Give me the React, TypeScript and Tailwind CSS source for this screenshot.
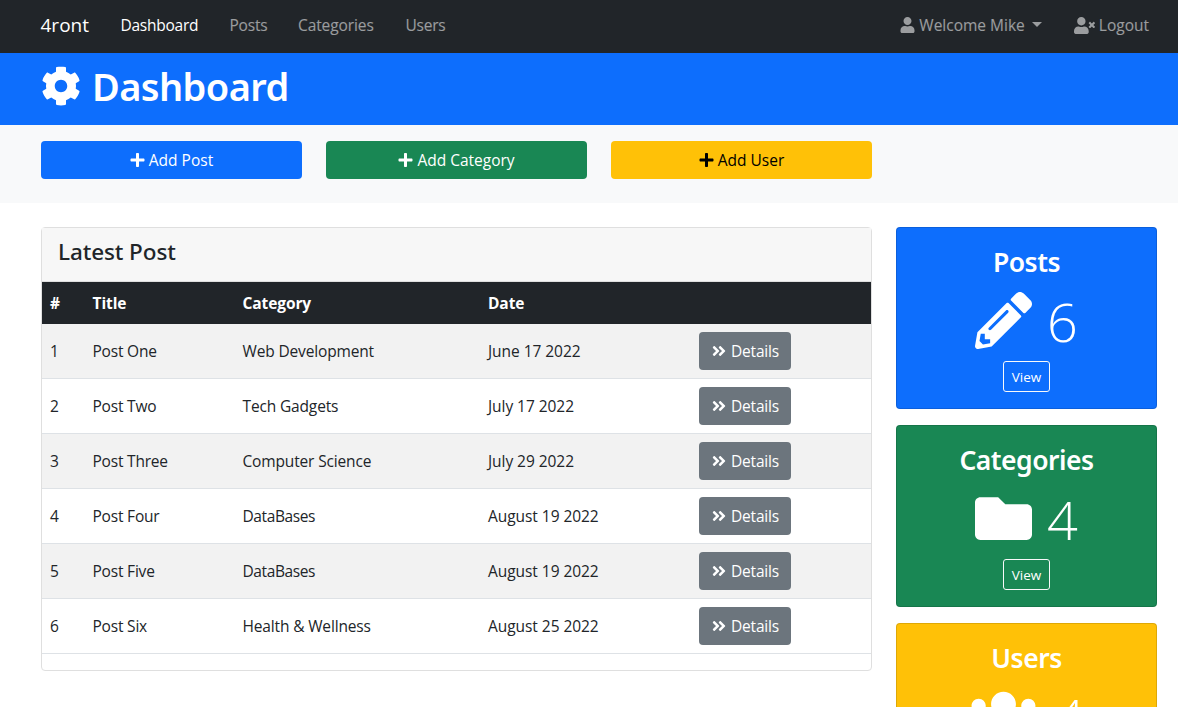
import type { ReactNode } from "react";
import { FaAngleDoubleRight, FaCog, FaFolder, FaPencilAlt, FaPlus, FaUser, FaUserTimes, FaUsers } from "react-icons/fa";

const posts = [
  { title: "Post One", category: "Web Development", date: "June 17 2022" },
  { title: "Post Two", category: "Tech Gadgets", date: "July 17 2022" },
  { title: "Post Three", category: "Computer Science", date: "July 29 2022" },
  { title: "Post Four", category: "DataBases", date: "August 19 2022" },
  { title: "Post Five", category: "DataBases", date: "August 19 2022" },
  { title: "Post Six", category: "Health & Wellness", date: "August 25 2022" },
];

const columns = "grid grid-cols-[42.5px_150px_245.5px_211px_1fr] items-center pl-2";

function Navbar() {
  return (
    <nav className="flex h-[53px] items-center bg-[#212529] pb-[3px] text-white/55">
      <a className="ml-[40.5px] w-[80px] text-[19px] text-white">4ront</a>
      <a className="w-[109px] tracking-[-0.25px] text-white">Dashboard</a>
      <a className="w-[68.5px] tracking-[-0.2px]">Posts</a>
      <a className="w-[107.5px] tracking-[-0.1px]">Categories</a>
      <a className="tracking-[-0.25px]">Users</a>
      <a className="mr-[32px] ml-auto flex items-center">
        <FaUser className="h-4 w-[15px]" />
        <span className="ml-1">Welcome Mike</span>
        <span className="mb-[2px] ml-[7px] border-x-[5px] border-t-[5px] border-x-transparent border-t-white/55" />
      </a>
      <a className="mr-[29px] flex items-center">
        <FaUserTimes className="h-[17px] w-[21px]" />
        <span className="ml-[4px]">Logout</span>
      </a>
    </nav>
  );
}

function ActionButton({ className, children }: { className: string; children: ReactNode }) {
  return (
    <button className={"flex h-[38px] w-[261px] items-center justify-center gap-[4px] rounded pb-px " + className}>
      <FaPlus className="h-4 w-[15px]" />
      {children}
    </button>
  );
}

function StatCard({ title, count, icon, className }: { title: string; count: number; icon: ReactNode; className: string }) {
  return (
    <section className={"flex h-[182px] shrink-0 flex-col items-center rounded border border-black/13 pt-4 text-white " + className}>
      <h3 className="h-[41px] font-['Noto_Sans',sans-serif] text-[26.5px] leading-[37px] font-semibold tracking-[-0.5px]">{title}</h3>
      <div className="flex h-[76px] items-center gap-[15px] pb-[5px] text-[54px] leading-[66px] font-light">
        {icon}
        <span className="mt-[1px]">{count}</span>
      </div>
      <a className="flex h-[31px] w-[47px] items-center justify-center rounded-[3px] border border-[#f8f9fa] text-[13.5px]">View</a>
    </section>
  );
}

export default function App() {
  return (
    <div className="h-[707px] overflow-hidden bg-white font-['Open_Sans',sans-serif] text-[15.5px] leading-6 text-[#212529]">
      <Navbar />
      <header className="flex h-[72px] items-center bg-[#0d6efd] pb-[6px] pl-[41px] text-white">
        <FaCog className="h-10 w-10" />
        <h1 className="ml-[11px] font-['Noto_Sans',sans-serif] text-[38px] leading-[48px] font-semibold tracking-[-0.6px]">Dashboard</h1>
      </header>
      <section className="flex h-[78px] gap-6 bg-[#f8f9fa] pt-4 pl-[41px]">
        <ActionButton className="bg-[#0d6efd] text-white">Add Post</ActionButton>
        <ActionButton className="bg-[#198754] text-white">Add Category</ActionButton>
        <ActionButton className="bg-[#ffc107] text-black">Add User</ActionButton>
      </section>
      <main className="flex items-start gap-6 pt-6 pl-[41px]">
        <section className="h-[444px] w-[831px] rounded border border-[#dfdfdf]">
          <div className="h-[54px] border-b border-[#dfdfdf] bg-[#f7f7f7] px-4 pt-2">
            <h4 className="font-['Noto_Sans',sans-serif] text-[22.5px] leading-[31px] font-medium tracking-[-0.1px]">Latest Post</h4>
          </div>
          <div className={columns + " h-[42px] bg-[#212529] pb-px font-bold tracking-[-0.1px] text-white"}>
            <span>#</span>
            <span>Title</span>
            <span>Category</span>
            <span>Date</span>
          </div>
          {posts.map((post, i) => (
            <div key={post.title} className={columns + " h-[55px] border-b border-[#dee2e6] " + (i % 2 === 0 ? "bg-[#f2f2f2]" : "bg-white")}>
              <span>{i + 1}</span>
              <span className="tracking-[-0.2px]">{post.title}</span>
              <span className={post.category === "DataBases" ? "tracking-[-0.4px]" : "tracking-[-0.15px]"}>{post.category}</span>
              <span className="tracking-[-0.05px]">{post.date}</span>
              <button className="flex h-[38px] w-[92px] items-center justify-center gap-[4px] rounded bg-[#6c757d] pb-px tracking-[-0.2px] text-white">
                <FaAngleDoubleRight className="h-4 w-4" />
                Details
              </button>
            </div>
          ))}
        </section>
        <aside className="flex w-[261px] flex-col gap-4">
          <StatCard title="Posts" count={6} icon={<FaPencilAlt className="size-[57px]" />} className="bg-[#0d6efd]" />
          <StatCard title="Categories" count={4} icon={<FaFolder className="size-[57px]" />} className="bg-[#198754]" />
          <StatCard title="Users" count={4} icon={<FaUsers className="h-[57px] w-[71px]" />} className="bg-[#ffc107]" />
        </aside>
      </main>
    </div>
  );
}
